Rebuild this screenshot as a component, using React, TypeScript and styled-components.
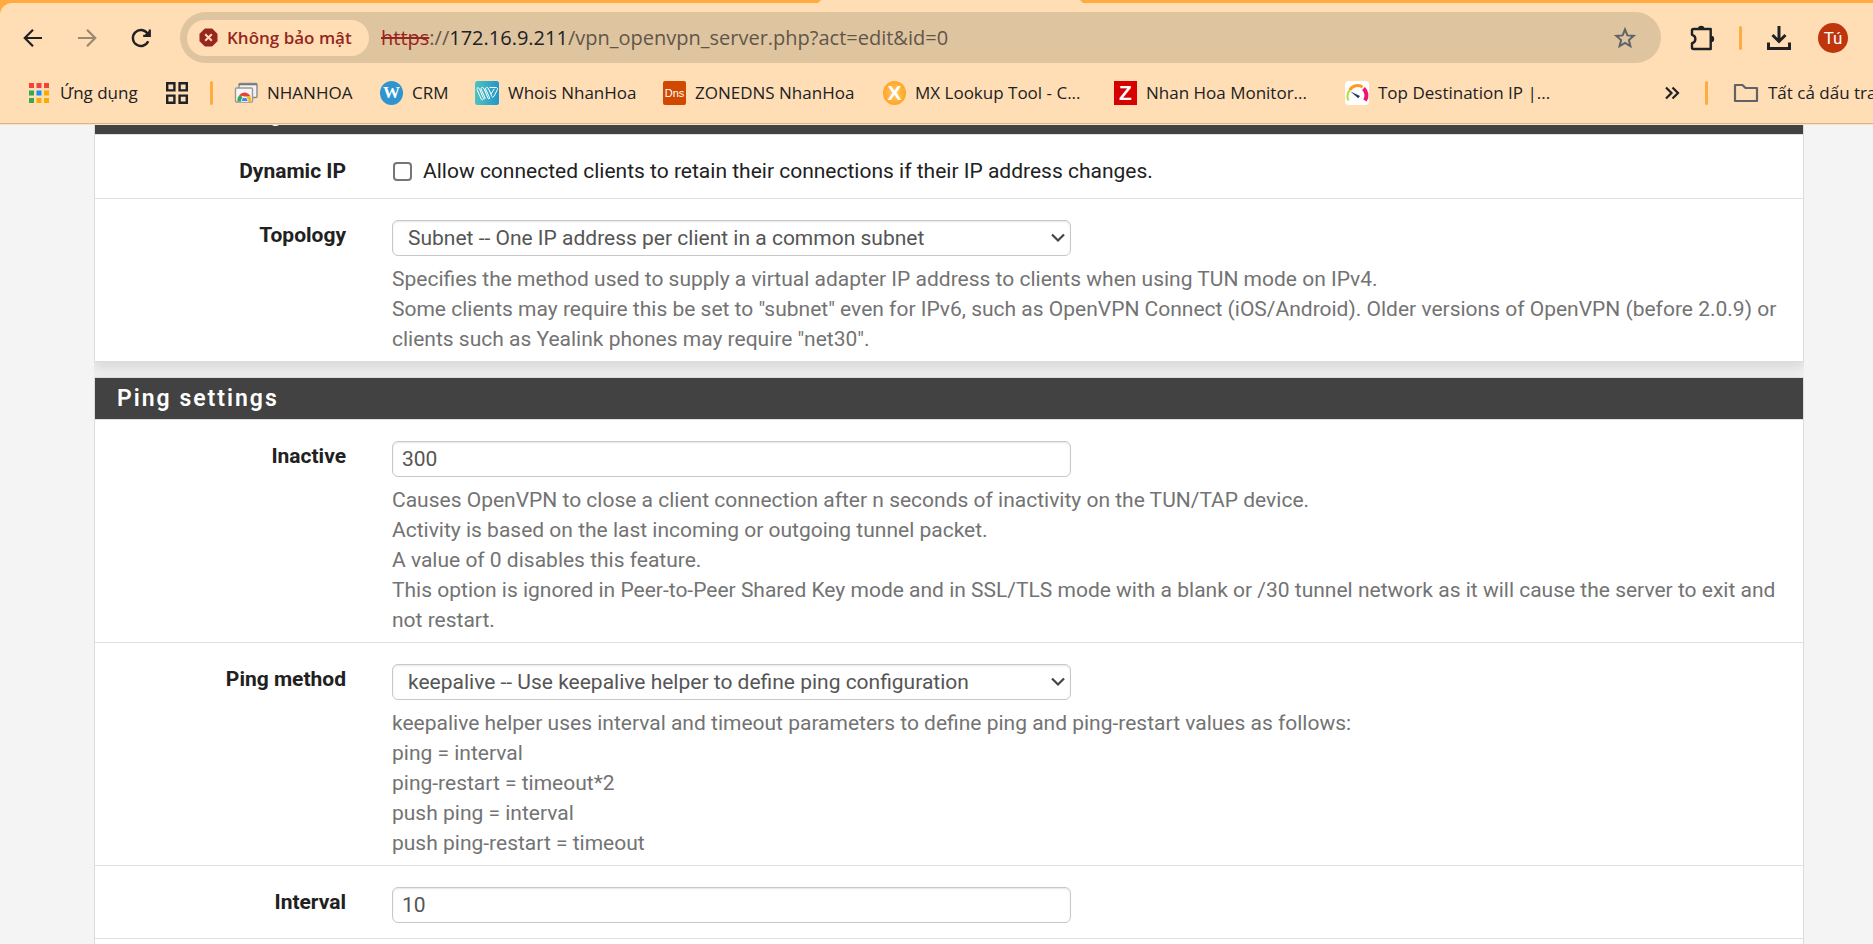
import React from "react";
import styled, { createGlobalStyle } from "styled-components";

const Global = createGlobalStyle`
  * { box-sizing: border-box; }
  body { margin: 0; background: #f4f4f4; overflow: hidden; }
`;

const ui = `"Open Sans", "Noto Sans", sans-serif`;

const Window = styled.div`
  display: flex;
  flex-direction: column;
  height: 100vh;
  overflow: hidden;
  font-family: Roboto, sans-serif;
  font-size: 21px;
  line-height: 30px;
  color: #212121;
`;

/* ---------- browser chrome ---------- */

const Chrome = styled.header`
  flex: none;
  background: #ffab40;
  font-family: ${ui};
  color: #202124;
  overflow: hidden;
`;

const TabStrip = styled.div`
  display: flex;
  height: 3px;
  padding-left: 818px;
`;

const ActiveTab = styled.div`
  width: 265px;
  background: #ffdeb5;
  clip-path: polygon(3px 0, 262px 0, 265px 3px, 0 3px);
`;

const Bars = styled.div`
  background: #ffdeb5;
  border-radius: 12px 0 0 0;
  border-bottom: 1px solid #ffe3bd;
  box-shadow: inset 0 -1px 0 #d6b48c;
`;

const Toolbar = styled.div`
  display: flex;
  align-items: center;
  height: 69px;
  padding: 0 25px 0 21px;
`;

const IconButton = styled.button<{ $dim?: boolean }>`
  display: flex;
  padding: 0;
  border: 0;
  background: none;
  color: #202124;
  opacity: ${(p) => (p.$dim ? 0.45 : 1)};
`;

const Nav = styled.nav`
  display: flex;
  gap: 30px;
  margin-right: 27px;
`;

const Omnibox = styled.div`
  display: flex;
  align-items: center;
  flex: 1;
  height: 51px;
  padding: 0 24px 0 7px;
  border-radius: 26px;
  background: #dfc4a0;
`;

const Chip = styled.button`
  display: flex;
  align-items: center;
  gap: 9px;
  width: 182px;
  height: 36px;
  padding: 0 0 0 12px;
  border: 0;
  border-radius: 18px;
  background: #ffdeb5;
  color: #962620;
  font: 600 17px/24px ${ui};
  white-space: nowrap;
`;

const Url = styled.div`
  flex: 1;
  margin-left: 12px;
  font-size: 20px;
  line-height: 30px;
  color: #5f564b;
  white-space: nowrap;
  s { color: #962620; }
  b { font-weight: 400; color: #202124; }
`;

const Divider = styled.span`
  flex: none;
  width: 3px;
  height: 24px;
  border-radius: 2px;
  background: #ffab40;
`;

const Actions = styled.div`
  display: flex;
  align-items: center;
  gap: 24px;
  margin-left: 29px;
`;

const Avatar = styled.button`
  width: 30px;
  height: 30px;
  margin-left: 2px;
  padding: 0;
  border: 0;
  border-radius: 50%;
  background: #bf360c;
  color: #fff;
  font: 400 17px/30px Roboto, sans-serif;
`;

const BookmarkBar = styled.div`
  display: flex;
  align-items: center;
  height: 52px;
  padding: 0 0 11px 27px;
`;

const Bookmark = styled.a<{ $width: number }>`
  display: flex;
  flex: none;
  align-items: center;
  gap: 9px;
  width: ${(p) => p.$width}px;
  color: #202124;
  font-size: 17px;
  line-height: 24px;
  text-decoration: none;
  white-space: nowrap;
  svg { flex: none; }
`;

const BarButton = styled(IconButton)`
  margin-right: 22px;
`;

const Folders = styled.div`
  display: flex;
  margin-left: 21px;
`;

const BarEnd = styled.div`
  display: flex;
  flex: none;
  align-items: center;
  width: 209px;
  margin-left: auto;
  gap: 25px;
  overflow: hidden;
`;

/* ---------- page ---------- */

const Page = styled.main`
  display: flex;
  flex: 1;
  flex-direction: column;
  min-height: 0;
  margin: 0 69px 0 94px;
  background: #f0f0f0;
  overflow: hidden;
`;

const Panel = styled.section<{ $scrolled?: boolean; $fill?: boolean }>`
  flex: ${(p) => (p.$fill ? "1 0 auto" : "none")};
  margin: ${(p) => (p.$scrolled ? "-33px 0 15px" : "0")};
  border: 1px solid #dcdcdc;
  background: #fff;
  box-shadow: 0 6px 12px rgba(0, 0, 0, 0.1);
`;

const PanelTitle = styled.h2`
  height: 41px;
  margin: 0;
  padding: 0 22px;
  background: #424242;
  color: #fff;
  font-size: 23px;
  font-weight: 600;
  line-height: 41px;
  letter-spacing: 2px;
`;

const Row = styled.div`
  display: grid;
  grid-template-columns: 251px 1fr;
  column-gap: 46px;
  padding: 21px 22px 7px 0;
  border-top: 1px solid #e0e0e0;
`;

const Label = styled.label`
  font-weight: 700;
  text-align: right;
`;

const Field = styled.div`
  min-width: 0;
`;

const control = `
  display: block;
  width: calc(50% - 16px);
  height: 36px;
  margin-bottom: 8px;
  border: 1px solid #c8c8c8;
  border-radius: 6px;
  background-color: #fff;
  box-shadow: inset 0 1px 2px rgba(0, 0, 0, 0.1);
  color: #555;
  font: 400 21px/30px Roboto, sans-serif;
`;

const TextInput = styled.input`
  ${control}
  padding: 0 9px;
`;

const SelectBox = styled.div`
  display: grid;
  align-items: center;
  svg {
    grid-area: 1 / 1;
    justify-self: start;
    margin: 0 0 8px calc(50% - 37px);
    pointer-events: none;
    z-index: 1;
  }
`;

const Select = styled.select`
  ${control}
  grid-area: 1 / 1;
  padding: 0 15px;
  appearance: none;
`;

const Help = styled.p`
  margin: 0;
  color: #737373;
`;

const CheckLabel = styled.label`
  display: flex;
  align-items: center;
  gap: 11px;
  height: 30px;
  margin-bottom: 5px;
`;

const Check = styled.input`
  appearance: none;
  width: 19px;
  height: 19px;
  margin: 0 0 0 1px;
  border: 2px solid #767676;
  border-radius: 4px;
  background: #fff;
`;

/* ---------- icons ---------- */

const Arrow = ({ flip }: { flip?: boolean }) => (
  <svg width="24" height="24" viewBox="0 0 24 24" fill="none" stroke="currentColor" strokeWidth="2.2">
    <path d={flip ? "M3 12h17M12 3.8l8.2 8.2-8.2 8.2" : "M21 12H4M12 3.8L3.8 12l8.2 8.2"} />
  </svg>
);

const Reload = () => (
  <svg width="24" height="24" viewBox="0 0 24 24" fill="none" stroke="currentColor" strokeWidth="2.4">
    <path d="M19.2 15.3A8 8 0 1 1 18.500 7.500" />
    <path d="M20.800 3.400V9.800H14.200" strokeWidth="2.2" />
    <path d="M20.800 4v5.800h-5.800z" fill="currentColor" stroke="none" />
  </svg>
);

const Danger = () => (
  <svg width="19" height="19" viewBox="0 0 19 19">
    <path d="M5.800 1h7.400L18 5.800v7.400L13.200 18H5.800L1 13.200V5.800z" fill="#962620" stroke="#962620" strokeLinejoin="round" />
    <path d="M6.200 6.200l6.600 6.600M12.800 6.200l-6.600 6.600" stroke="#ffdeb5" strokeWidth="2" />
  </svg>
);

const Star = () => (
  <svg width="24" height="24" viewBox="0 0 24 24" fill="none" stroke="#5f6368" strokeWidth="2">
    <path d="M12 3.500l2.400 5.900 6.300.5-4.800 4.100 1.500 6.200L12 16.900l-5.400 3.300 1.500-6.200-4.800-4.100 6.300-.5z" />
  </svg>
);

const Puzzle = () => (
  <svg width="25" height="26" viewBox="0 0 25 26">
    <path
      d="M3.500 4h17.200v20H3.500q-1.500 0-1.500-1.500V18.200a4.300 4.300 0 0 0 0-8.400V5.500Q2 4 3.500 4z"
      fill="none" stroke="#202124" strokeWidth="2.4" strokeLinejoin="round"
    />
    <path d="M8 4a3.200 3.200 0 0 1 6.400 0zM21 10.800a3.200 3.200 0 0 1 0 6.400z" fill="#202124" />
  </svg>
);

const Download = () => (
  <svg width="26" height="26" viewBox="0 0 26 26" fill="none" stroke="#202124" strokeWidth="3">
    <path d="M13 1v15M6.500 10l6.500 6.500 6.500-6.500M2.500 17.500v6h21v-6" />
  </svg>
);

const appColors = ["#f44336", "#f44336", "#f44336", "#34a853", "#1a8cff", "#f9ab00", "#34a853", "#f9ab00", "#f9ab00"];
const Apps = () => (
  <svg width="24" height="24" viewBox="0 0 24 24">
    {appColors.map((c, i) => (
      <rect key={i} x={2 + (i % 3) * 7.5} y={2 + Math.floor(i / 3) * 7.5} width="5" height="5" fill={c} />
    ))}
  </svg>
);

const GridIcon = () => (
  <svg width="22" height="22" viewBox="0 0 22 22" fill="none" stroke="#202124" strokeWidth="2.4">
    <path d="M1.200 1.200h7.200v7.200H1.200zM13.600 1.200h7.200v7.200h-7.200zM1.200 13.600h7.200v7.200H1.200zM13.600 13.600h7.200v7.200h-7.200z" />
  </svg>
);

const ChromeWindows = () => (
  <svg width="24" height="24" viewBox="0 0 24 24">
    <rect x="5" y="2.500" width="18" height="14" rx="1" fill="#f2f2f2" stroke="#8a8a8a" strokeWidth="1.4" />
    <path d="M5 3.500h18" stroke="#777" strokeWidth="1.5" />
    <rect x="1.500" y="7" width="17" height="14" rx="1" fill="#f7f7f7" stroke="#999" strokeWidth="1.4" />
    <path d="M3.500 20.500a7 7 0 0 1 3-7l4 6.500z" fill="#34a853" />
    <path d="M5 14.300a6.700 6.700 0 0 1 11.500 1.200H10.500z" fill="#ea4335" />
    <path d="M16.500 15.500a8 8 0 0 1 .5 5h-6l2-5z" fill="#fbbc05" />
    <path d="M7.500 20.500a3.300 3.300 0 1 1 6.400 0z" fill="#4285f4" stroke="#fff" strokeWidth=".8" />
  </svg>
);

const Badge = styled.span<{ $bg: string; $radius: string; $face: string }>`
  flex: none;
  width: 23px;
  height: 24px;
  border-radius: ${(p) => p.$radius};
  background: ${(p) => p.$bg};
  color: #fff;
  font: ${(p) => p.$face};
  text-align: center;
`;

const WhoisIcon = () => (
  <svg width="24" height="24" viewBox="0 0 24 24">
    <defs>
      <linearGradient id="whois" x1="0" x2="1">
        <stop offset="0" stopColor="#4fc3c0" />
        <stop offset="1" stopColor="#2196c9" />
      </linearGradient>
    </defs>
    <rect width="24" height="24" rx="2.5" fill="url(#whois)" />
    <path
      d="M1.500 7.800q1.500-2.300 3 0l4 9.700q1 1.500 1.700-.3L5.800 7.500q1.500-2.200 3.200 0l4 9.800q1 1.500 1.700-.3L10.300 7.500q1.500-2 3-.3l2.600 5.800M14.500 6.500h7q1.500.5.800 2.200l-3.200 6.500q-1.500 2-2.500 0l-.6-2 3.300-5.500M2 8.500l4.300 9.800q1 1 2 0"
      fill="none" stroke="#fff" strokeWidth="1" strokeLinejoin="round"
    />
  </svg>
);

const Gauge = () => (
  <svg width="24" height="24" viewBox="0 0 24 24" fill="none" strokeWidth="3">
    <rect width="24" height="24" rx="4" fill="#fff" />
    <path d="M3.500 19.500A9.500 9.500 0 0 1 4.800 9" stroke="#b4dc3c" strokeWidth="2" />
    <path d="M4.800 9A9 9 0 0 1 17.500 6" stroke="#ff9a1f" />
    <path d="M18.500 7.500a9.500 9.500 0 0 1 1.500 12" stroke="#f0146e" strokeWidth="4" />
    <path d="M5.500 10.500l9.500 4.500-1.800 2.300z" fill="#1d3a63" />
  </svg>
);

const More = () => (
  <svg width="16" height="14" viewBox="0 0 16 14" fill="none" stroke="currentColor" strokeWidth="2.2">
    <path d="M2 1.500L7.500 7 2 12.500M8.500 1.500L14 7l-5.500 5.500" />
  </svg>
);

const Folder = () => (
  <svg width="26" height="20" viewBox="0 0 26 20" fill="none" stroke="#5f6368" strokeWidth="2.2" strokeLinejoin="round">
    <path d="M2 2h7.500l3 3H24v13H2z" />
  </svg>
);

const Chevron = () => (
  <svg width="16" height="10" viewBox="0 0 16 10" fill="none" stroke="#444" strokeWidth="2.2">
    <path d="M2 1.500L8 7.500l6-6" />
  </svg>
);

const sans = `"Liberation Sans", sans-serif`;

const bookmarks = [
  { text: "NHANHOA", width: 146, icon: <ChromeWindows /> },
  { text: "CRM", width: 95, icon: <Badge $bg="#2f95d0" $radius="50%" $face={`700 17px/24px "Liberation Serif", serif`}>W</Badge> },
  { text: "Whois NhanHoa", width: 188, icon: <WhoisIcon /> },
  { text: "ZONEDNS NhanHoa", width: 220, icon: <Badge $bg="#d14900" $radius="2px" $face={`400 11px/24px ${sans}`}>Dns</Badge> },
  { text: "MX Lookup Tool - C...", width: 231, icon: <Badge $bg="radial-gradient(#ffc870, #ff9800)" $radius="50%" $face={`700 21px/24px ${sans}`}>X</Badge> },
  { text: "Nhan Hoa Monitor...", width: 231, icon: <Badge $bg="#d60000" $radius="0" $face={`700 21px/24px ${sans}`}>Z</Badge> },
  { text: "Top Destination IP |...", width: 210, icon: <Gauge /> },
];

export default function App() {
  return (
    <Window>
      <Global />
      <Chrome>
        <TabStrip><ActiveTab /></TabStrip>
        <Bars>
          <Toolbar>
            <Nav>
              <IconButton aria-label="Back"><Arrow /></IconButton>
              <IconButton aria-label="Forward" $dim><Arrow flip /></IconButton>
              <IconButton aria-label="Reload"><Reload /></IconButton>
            </Nav>
            <Omnibox>
              <Chip><Danger />Không bảo mật</Chip>
              <Url><s>https</s>://<b>172.16.9.211</b>/vpn_openvpn_server.php?act=edit&amp;id=0</Url>
              <IconButton aria-label="Bookmark this tab"><Star /></IconButton>
            </Omnibox>
            <Actions>
              <IconButton aria-label="Extensions"><Puzzle /></IconButton>
              <Divider />
              <IconButton aria-label="Downloads"><Download /></IconButton>
              <Avatar>Tú</Avatar>
            </Actions>
          </Toolbar>
          <BookmarkBar>
            <Bookmark href="#apps" $width={139}><Apps />Ứng dụng</Bookmark>
            <BarButton aria-label="Tab groups"><GridIcon /></BarButton>
            <Divider />
            <Folders>
              {bookmarks.map((b) => (
                <Bookmark key={b.text} href="#" $width={b.width}>{b.icon}{b.text}</Bookmark>
              ))}
            </Folders>
            <BarEnd>
              <IconButton aria-label="More bookmarks"><More /></IconButton>
              <Divider />
              <Bookmark href="#all" $width={200}><Folder />Tất cả dấu trang</Bookmark>
            </BarEnd>
          </BookmarkBar>
        </Bars>
      </Chrome>
      <Page>
        <Panel $scrolled>
          <PanelTitle>Client Settings</PanelTitle>
          <Row>
            <Label htmlFor="dynamic">Dynamic IP</Label>
            <CheckLabel>
              <Check id="dynamic" type="checkbox" />
              Allow connected clients to retain their connections if their IP address changes.
            </CheckLabel>
          </Row>
          <Row>
            <Label htmlFor="topology">Topology</Label>
            <Field>
              <SelectBox>
                <Select id="topology"><option>Subnet -- One IP address per client in a common subnet</option></Select>
                <Chevron />
              </SelectBox>
              <Help>
                Specifies the method used to supply a virtual adapter IP address to clients when using TUN mode on IPv4.<br />
                Some clients may require this be set to "subnet" even for IPv6, such as OpenVPN Connect (iOS/Android). Older versions of OpenVPN (before 2.0.9) or clients such as Yealink phones may require "net30".
              </Help>
            </Field>
          </Row>
        </Panel>
        <Panel $fill>
          <PanelTitle>Ping settings</PanelTitle>
          <Row>
            <Label htmlFor="inactive">Inactive</Label>
            <Field>
              <TextInput id="inactive" defaultValue="300" />
              <Help>
                Causes OpenVPN to close a client connection after n seconds of inactivity on the TUN/TAP device.<br />
                Activity is based on the last incoming or outgoing tunnel packet.<br />
                A value of 0 disables this feature.<br />
                This option is ignored in Peer-to-Peer Shared Key mode and in SSL/TLS mode with a blank or /30 tunnel network as it will cause the server to exit and not restart.
              </Help>
            </Field>
          </Row>
          <Row>
            <Label htmlFor="method">Ping method</Label>
            <Field>
              <SelectBox>
                <Select id="method"><option>keepalive -- Use keepalive helper to define ping configuration</option></Select>
                <Chevron />
              </SelectBox>
              <Help>
                keepalive helper uses interval and timeout parameters to define ping and ping-restart values as follows:<br />
                ping = interval<br />
                ping-restart = timeout*2<br />
                push ping = interval<br />
                push ping-restart = timeout
              </Help>
            </Field>
          </Row>
          <Row>
            <Label htmlFor="interval">Interval</Label>
            <Field><TextInput id="interval" defaultValue="10" /></Field>
          </Row>
          <Row />
        </Panel>
      </Page>
    </Window>
  );
}
